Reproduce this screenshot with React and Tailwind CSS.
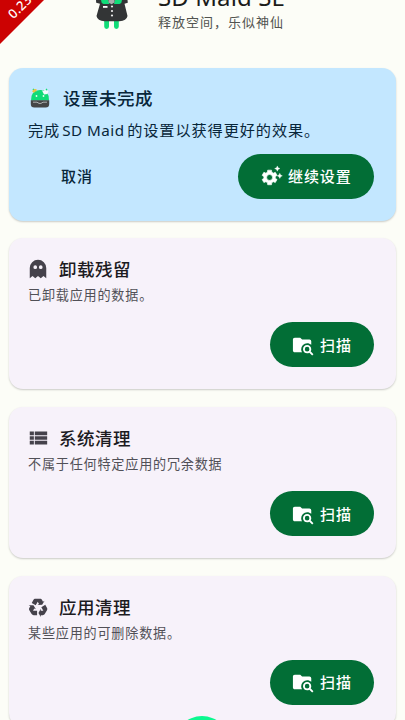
import React from 'react';

const scanTools = [
    { icon: 'ghost', title: '卸载残留', text: '已卸载应用的数据。' },
    { icon: 'list', title: '系统清理', text: '不属于任何特定应用的冗余数据' },
    { icon: 'recycle', title: '应用清理', text: '某些应用的可删除数据。' },
];

const paths = {
    ghost: 'M12 2a9 9 0 0 0-9 9v11l3-2.5L9 22l3-2.5 3 2.5 3-2.5 3 2.5V11a9 9 0 0 0-9-9M9 8a2 2 0 0 1 0 4 2 2 0 0 1 0-4m6 0a2 2 0 0 1 0 4 2 2 0 0 1 0-4z',
    list: 'M8.500 5v4H22V5M8.500 19H22v-4H8.500m0-1H22v-4H8.500M3 9h4.500V5H3m0 14h4.500v-4H3m0-1h4.500v-4H3v4z',
    recycle: 'M21.82,15.42L19.32,19.75C18.83,20.61 17.92,21.06 17,21H15V23L12.5,18.5L15,14V16H17.82L15.6,12.15L19.93,9.65L21.73,12.77C22.25,13.54 22.32,14.57 21.82,15.42M9.21,3.06H14.21C15.19,3.06 16.04,3.63 16.45,4.45L17.45,6.19L19.18,5.19L16.54,9.6L11.39,9.69L13.12,8.69L11.71,6.24L9.5,10.09L5.16,7.59L6.96,4.47C7.37,3.64 8.22,3.06 9.21,3.06M5.05,19.76L2.55,15.43C2.06,14.58 2.13,13.56 2.64,12.79L3.64,11.06L1.91,10.06L7.05,10.14L9.7,14.56L7.97,13.56L6.56,16H11V21H7.4C6.47,21.07 5.55,20.61 5.05,19.76Z',
    folder: 'M16.5,12C19,12 21,14 21,16.5C21,17.38 20.75,18.21 20.31,18.9L23.39,22L22,23.39L18.88,20.32C18.19,20.75 17.37,21 16.5,21C14,21 12,19 12,16.5C12,14 14,12 16.5,12M16.5,14A2.5,2.5 0 0,0 14,16.5A2.5,2.5 0 0,0 16.5,19A2.5,2.5 0 0,0 19,16.5A2.5,2.5 0 0,0 16.5,14M9,4L11,6H19A2,2 0 0,1 21,8V11.81C19.83,10.69 18.25,10 16.5,10A6.5,6.5 0 0,0 10,16.5C10,17.79 10.37,19 11,20H3C1.89,20 1,19.1 1,18V6C1,4.89 1.89,4 3,4H9Z',
};

function Icon({ name, className }) {
    return (
        <svg viewBox="0 0 24 24" fill="currentColor" fillRule="evenodd" className={className}>
            <path d={paths[name]} />
        </svg>
    );
}

function GearSparkle() {
    return (
        <svg viewBox="0 0 24 24" fill="currentColor" className="h-[22px] w-[22px] shrink-0">
            <g transform="translate(-.7 3.500) scale(0.84)">
                <path fillRule="evenodd" stroke="currentColor" strokeWidth=".8" strokeLinejoin="round" d="M19.4 13a7.5 7.5 0 0 0 0-2l2.3-1.7-2.3-4-2.6 1.1a7.5 7.5 0 0 0-1.9-1.1L14.5 2.500h-5l-.4 2.800a7.5 7.5 0 0 0-1.900 1.100L4.600 5.300l-2.300 4L4.600 11a7.500 7.500 0 0 0 0 2l-2.300 1.700 2.300 4 2.600-1.100a7.500 7.500 0 0 0 1.900 1.100l.4 2.800h5l.4-2.800a7.500 7.500 0 0 0 1.900-1.100l2.600 1.100 2.300-4zM12 8.200a3.800 3.800 0 0 1 0 7.600 3.800 3.800 0 0 1 0-7.600z" />
            </g>
            <path d="M17.800 1l.9 2 2 .9-2 .9-.9 2-.9-2-2-.9 2-.9zM20.500 9l.9 1.900 1.900.9-1.900.9-.9 1.900-.9-1.900-1.900-.9 1.900-.9z" stroke="currentColor" strokeWidth=".4" />
        </svg>
    );
}

// Mascot's lower half, the head is scrolled off the top
function Mascot() {
    return (
        <svg viewBox="0 0 36 30" className="h-[30px] w-9 shrink-0">
            <path d="M10.200 19v7.500a2.400 2.400 0 0 0 4.800 0V19zM20 19v7.500a2.400 2.400 0 0 0 4.800 0V19z" fill="#10dc78" />
            <path d="M2 0h31.500l.3 2.800-3.300 1 3 12.200q-1 5-8 5.200H10.500q-7-.2-8-5.200L6 3.800 2.200 2.800z" fill="#333536" />
            <path d="M7 0h7l1.500 4H9.500Q7 3 7 0zM21 0h7q0 3-2.500 4H20z" fill="#10dc78" />
            <path d="M14.500 0h6v2.500l-3 1.700-3-1.700z" fill="#a9adac" />
            <path d="M9 6h4.500v1.800H9z" fill="#fff" />
            <circle cx="18" cy="6.500" r="1.100" fill="#eee" />
            <circle cx="18" cy="11" r="1.100" fill="#eee" />
            <circle cx="18" cy="15.500" r="1.100" fill="#eee" />
        </svg>
    );
}

function SetupIcon() {
    return (
        <svg viewBox="0 0 20 20" className="h-5 w-5 shrink-0">
            <path d="M3 1l3 3M17 1l-3 3" stroke="#10dc78" strokeWidth="1.500" />
            <path d="M1 12.500Q.8 2.500 10 2t9 10.500z" fill="#10dc78" />
            <path d="M2 3.200l2-2 1.500 1.500L4 5zM4.500 1h2v2.500h-2z" fill="#f0c443" />
            <path d="M12 2.500l2 .5 1-2.500 1 2 2.500.5-1 3-3.500.5z" fill="#f4fbff" />
            <circle cx="6.500" cy="8" r=".9" fill="#e6fff2" />
            <circle cx="13.500" cy="8" r=".9" fill="#e6fff2" />
            <path d="M.8 12.300h18.400v3.700q0 3.500-3.500 3.500H4.300Q.8 19.500.8 16z" fill="#444546" />
            <path d="M3 14.200h4l2 1.200h2l2-1.200h4" fill="none" stroke="#c8cccd" strokeWidth=".8" />
        </svg>
    );
}

function ScanCard({ icon, title, text }) {
    return (
        <section className="h-[151px] w-[387px] shrink-0 rounded-[14px] bg-[#f7f2fa] pt-5 pr-[22px] pl-[18px] shadow-[0_1px_2px_rgba(0,0,0,0.2)]">
            <div className="flex h-[22px] items-center gap-[10px]">
                <Icon name={icon} className="h-[22px] w-[22px] text-[#45424b]" />
                <h2 className="text-[17.500px] leading-[22px] font-medium tracking-[0.5px] text-[#1c1b1f]">{title}</h2>
            </div>
            <p className="mt-[5px] pl-px text-[13.100px] leading-5 tracking-[0.8px] text-[#515057]">{text}</p>
            <button className="mt-[17px] ml-auto flex h-[45px] w-[104px] items-center rounded-full bg-[#026e36] pl-[22px] text-white">
                <Icon name="folder" className="h-[22px] w-[22px] shrink-0" />
                <span className="ml-[6px] text-[15px] leading-5 font-medium tracking-[0.9px]">扫描</span>
            </button>
        </section>
    );
}

export default function App() {
    return (
        <div className="relative h-[720px] w-[405px] overflow-hidden bg-[#fcfdf7] font-['Noto_Sans','Noto_Sans_CJK_SC',sans-serif]">
            <div className="absolute top-0 left-0 h-11 w-11 overflow-hidden bg-[#cc0202] [clip-path:polygon(0_0,100%_0,0_100%)]">
                <span className="absolute top-[7px] left-[15px] origin-bottom-left -rotate-45 text-[13px] leading-[14px] font-medium tracking-[0.3px] text-white">0.23.0</span>
            </div>

            <header className="flex h-[67.500px] pl-[94px]">
                <Mascot />
                <div className="ml-7">
                    <h1 className="-mt-[19px] text-[24px] leading-8 tracking-[0.1px] whitespace-nowrap text-[#1b1c1a]">SD Maid SE</h1>
                    <p className="-mt-px text-[13px] leading-5 tracking-[1px] text-[#51534f]">释放空间，乐似神仙</p>
                </div>
            </header>

            <main className="flex flex-col gap-[17.800px] pl-[9px]">
                <section className="h-[153px] w-[387px] shrink-0 rounded-[14px] bg-[#c3e7ff] pt-[19px] pr-[22px] pl-[19px] text-[#08263a] shadow-[0_1px_2px_rgba(0,0,0,0.2)]">
                    <div className="flex h-[22px] items-center gap-[13px] pl-[2px]">
                        <SetupIcon />
                        <h2 className="text-[17.500px] leading-[22px] font-medium tracking-[0.5px]">设置未完成</h2>
                    </div>
                    <p className="mt-[10px] text-[15.200px] leading-[22px] tracking-[0.9px] whitespace-nowrap">
                        完成<span className="mr-[2.500px] ml-[2px] tracking-[0.5px]">SD Maid</span>的设置以获得更好的效果。
                    </p>
                    <div className="mt-[13px] flex items-center justify-between pl-[33px]">
                        <button className="text-[15px] leading-5 font-medium tracking-[0.9px]">取消</button>
                        <button className="flex h-[45px] w-[136px] items-center rounded-full bg-[#026e36] pl-[23px] text-white">
                            <GearSparkle />
                            <span className="ml-[5px] text-[15px] leading-5 font-medium tracking-[0.9px] whitespace-nowrap">继续设置</span>
                        </button>
                    </div>
                </section>

                {scanTools.map((tool) => (
                    <ScanCard key={tool.icon} {...tool} />
                ))}
            </main>

            <div className="absolute top-[716px] left-[174px] h-14 w-14 rounded-full bg-[#0cf890]"></div>
        </div>
    );
}
